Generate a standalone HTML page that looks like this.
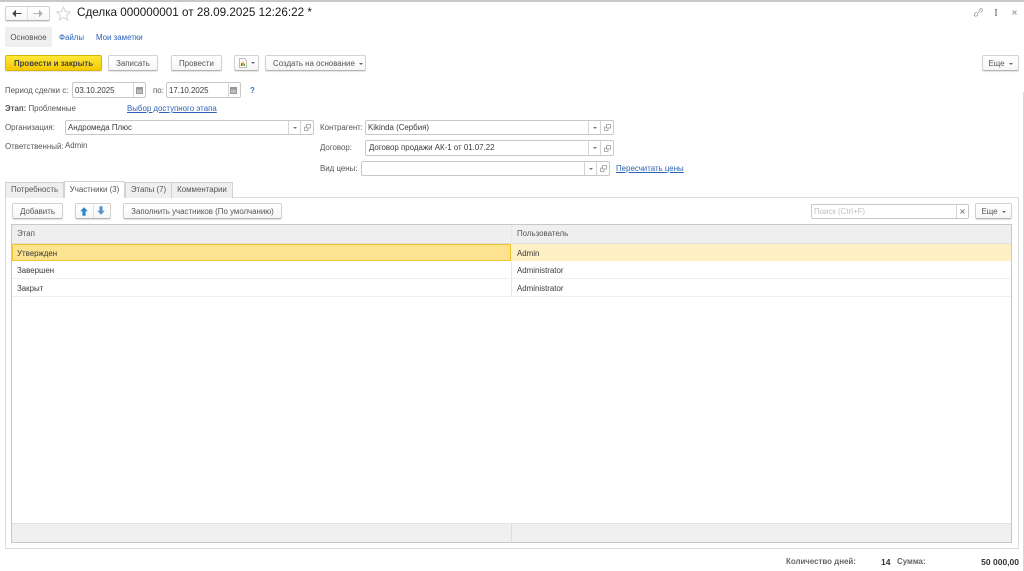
<!DOCTYPE html>
<html lang="ru"><head><meta charset="utf-8"><title>Сделка</title>
<style>
html,body{margin:0;padding:0;background:#fff}
body{width:1024px;height:571px;overflow:hidden;position:relative;font-family:"Liberation Sans",sans-serif;font-size:7.9px;color:#555;filter:blur(.3px)}
.a{position:absolute;white-space:nowrap}
.t{position:absolute;white-space:nowrap;line-height:12px}
.lnk{color:#2a62b8}
.u{text-decoration:underline}
.btn{position:absolute;box-sizing:border-box;border:1px solid #d2d2d2;border-bottom:1px solid #b4b4b4;border-radius:2px;background:linear-gradient(#fff,#f6f6f6);text-align:center;color:#555;box-shadow:0 1px 1px #e2e2e2;line-height:15px;white-space:nowrap}
.fld{position:absolute;box-sizing:border-box;border:1px solid #c8c8c8;border-radius:2px;background:#fff;color:#3a3a3a;padding-left:2px;white-space:nowrap}
.fld i{position:absolute;top:0;bottom:0;border-left:1px solid #d4d4d4;font-style:normal}
.dd:after{content:"";position:absolute;left:50%;top:50%;margin:-1px 0 0 -2px;border:2px solid transparent;border-top:2px solid #777;border-bottom:0}
.caret{display:inline-block;border:2px solid transparent;border-top:2px solid #666;border-bottom:0;vertical-align:middle;margin-left:4px}
.tab{position:absolute;box-sizing:border-box;top:182px;height:16px;border:1px solid #d2d2d2;border-bottom:none;background:#efefef;text-align:center;line-height:14px;color:#555;white-space:nowrap}
svg{position:absolute;display:block}
</style></head><body>
<div class="a" style="left:0;top:0;width:1024px;height:1.5px;background:#c8c8c8"></div>

<!-- nav -->
<div class="btn" style="left:5px;top:6px;width:45px;height:15px"></div>
<div class="a" style="left:27px;top:7px;width:1px;height:13px;background:#e2e2e2"></div>
<svg style="left:12px;top:10px" width="10" height="7" viewBox="0 0 10 7"><path d="M9.5 3.5H3M3.5 1L1 3.5L3.5 6Z" stroke="#444" stroke-width="1.1" fill="#444"/></svg>
<svg style="left:33px;top:10px" width="10" height="7" viewBox="0 0 10 7"><path d="M.5 3.5H7M6.5 1L9 3.5L6.5 6Z" stroke="#b0b0b0" stroke-width="1.1" fill="#b0b0b0"/></svg>
<svg style="left:56px;top:6px" width="15" height="15" viewBox="0 0 15 15"><path d="M7.5 1L9.4 5.6L14.3 6L10.6 9.2L11.7 14L7.5 11.4L3.3 14L4.4 9.2L.7 6L5.6 5.6Z" fill="#fff" stroke="#d4d4d4"/></svg>
<div class="a" style="left:77px;top:5px;font-size:11.7px;line-height:16px;color:#1a1a1a">Сделка 000000001 от 28.09.2025 12:26:22 *</div>

<svg style="left:973px;top:8px" width="10" height="9" viewBox="0 0 10 9"><path d="M4 6L6.5 3M3.5 4L1.5 6Q.8 7.5 2 8Q3.2 8.7 4.2 7.5L5 6.5M6 2.5L7 1.2Q8 .3 9 1Q9.8 2 9 3L7.5 4.6" fill="none" stroke="#999" stroke-width=".8"/></svg>
<div class="a" style="left:995px;top:9px;width:2px;height:1.5px;background:#999;box-shadow:0 2.5px 0 #999,0 5px 0 #999"></div>
<svg style="left:1012px;top:10px" width="5" height="5" viewBox="0 0 5 5"><path d="M.5 .5L4.5 4.5M4.5 .5L.5 4.5" stroke="#999" stroke-width=".9"/></svg>

<!-- section tabs -->
<div class="a" style="left:5px;top:27px;width:47px;height:20px;background:#efefef;border-radius:2px;text-align:center;line-height:21px;color:#555">Основное</div>
<div class="t lnk" style="left:59px;top:32px">Файлы</div>
<div class="t lnk" style="left:96px;top:32px">Мои заметки</div>

<!-- toolbar -->
<div class="btn" style="left:5px;top:55px;width:97px;height:16px;background:linear-gradient(#ffe83a,#f4c900);border-color:#d8b400;color:#444;font-weight:bold">Провести и закрыть</div>
<div class="btn" style="left:108px;top:55px;width:50px;height:16px">Записать</div>
<div class="btn" style="left:171px;top:55px;width:51px;height:16px">Провести</div>
<div class="btn" style="left:234px;top:55px;width:25px;height:16px"></div>
<svg style="left:239px;top:58px" width="8" height="10" viewBox="0 0 8 10"><path d="M.5 .5H5.5L7.5 2.5V9.5H.5Z" fill="#fff" stroke="#aaa" stroke-width=".8"/><rect x="2" y="5" width="1.2" height="3" fill="#c33"/><rect x="3.4" y="3.5" width="1.2" height="4.5" fill="#d90"/><rect x="4.8" y="5.5" width="1.2" height="2.5" fill="#4a4"/></svg>
<div class="a" style="left:251px;top:62px;border:2px solid transparent;border-top:2px solid #666;border-bottom:0"></div>
<div class="btn" style="left:265px;top:55px;width:101px;height:16px;text-align:left;padding-left:7px">Создать на основание<span class="caret"></span></div>
<div class="btn" style="left:982px;top:55px;width:37px;height:16px">Еще<span class="caret"></span></div>

<!-- period -->
<div class="t" style="left:5px;top:85px">Период сделки с:</div>
<div class="fld" style="left:72px;top:82px;width:74px;height:16px;line-height:15px">03.10.2025<i style="left:60px;width:12px"></i></div>
<svg style="left:136px;top:87px" width="7" height="7" viewBox="0 0 7 7"><rect x="0" y="0" width="7" height="7" fill="#999"/><rect x="1" y="2.5" width="5" height="3.5" fill="#bbb"/></svg>
<div class="t" style="left:153px;top:85px">по:</div>
<div class="fld" style="left:166px;top:82px;width:75px;height:16px;line-height:15px">17.10.2025<i style="left:61px;width:12px"></i></div>
<svg style="left:230px;top:87px" width="7" height="7" viewBox="0 0 7 7"><rect x="0" y="0" width="7" height="7" fill="#999"/><rect x="1" y="2.5" width="5" height="3.5" fill="#bbb"/></svg>
<div class="t" style="left:250px;top:85px;color:#2a7ac0;font-weight:bold">?</div>

<!-- stage -->
<div class="t" style="left:5px;top:103px"><b style="font-weight:bold">Этап:</b> Проблемные</div>
<div class="t lnk u" style="left:127px;top:103px">Выбор доступного этапа</div>

<!-- org -->
<div class="t" style="left:5px;top:122px">Организация:</div>
<div class="fld" style="left:65px;top:120px;width:249px;height:15px;line-height:13px">Андромеда Плюс<i class="dd" style="left:222px;width:12px"></i><i style="left:234px;width:13px"></i></div>
<svg style="left:304px;top:124px" width="7" height="7" viewBox="0 0 7 7"><path d="M2.5.5H6.5V4H2.5ZM.5 3H2.5M.5 3V6.5H4V4.5" fill="none" stroke="#999" stroke-width=".8"/></svg>
<div class="t" style="left:5px;top:141px">Ответственный:</div>
<div class="t" style="left:65px;top:140px">Admin</div>

<div class="t" style="left:320px;top:122px">Контрагент:</div>
<div class="fld" style="left:365px;top:120px;width:249px;height:15px;line-height:13px">Kikinda (Сербия)<i class="dd" style="left:222px;width:12px"></i><i style="left:234px;width:13px"></i></div>
<svg style="left:604px;top:124px" width="7" height="7" viewBox="0 0 7 7"><path d="M2.5.5H6.5V4H2.5ZM.5 3H2.5M.5 3V6.5H4V4.5" fill="none" stroke="#999" stroke-width=".8"/></svg>

<div class="t" style="left:320px;top:142px">Договор:</div>
<div class="fld" style="left:365px;top:140px;width:249px;height:16px;line-height:14px;padding-left:3px">Договор продажи АК-1 от 01.07.22<i class="dd" style="left:222px;width:12px"></i><i style="left:234px;width:13px"></i></div>
<svg style="left:604px;top:145px" width="7" height="7" viewBox="0 0 7 7"><path d="M2.5.5H6.5V4H2.5ZM.5 3H2.5M.5 3V6.5H4V4.5" fill="none" stroke="#999" stroke-width=".8"/></svg>

<div class="t" style="left:320px;top:163px">Вид цены:</div>
<div class="fld" style="left:361px;top:161px;width:249px;height:15px"><i class="dd" style="left:222px;width:12px"></i><i style="left:234px;width:13px"></i></div>
<svg style="left:600px;top:165px" width="7" height="7" viewBox="0 0 7 7"><path d="M2.5.5H6.5V4H2.5ZM.5 3H2.5M.5 3V6.5H4V4.5" fill="none" stroke="#999" stroke-width=".8"/></svg>
<div class="t lnk u" style="left:616px;top:163px">Пересчитать цены</div>

<!-- pane -->
<div class="a" style="left:5px;top:197px;width:1014px;height:352px;box-sizing:border-box;border:1px solid #dcdcdc"></div>
<div class="tab" style="left:5px;width:59px">Потребность</div>
<div class="tab" style="left:64px;width:61px;top:181px;height:17px;background:#fff;line-height:16px">Участники (3)</div>
<div class="tab" style="left:125px;width:47px">Этапы (7)</div>
<div class="tab" style="left:171px;width:62px">Комментарии</div>

<div class="btn" style="left:12px;top:203px;width:51px;height:16px">Добавить</div>
<div class="btn" style="left:75px;top:203px;width:36px;height:16px"></div>
<div class="a" style="left:93px;top:204px;width:1px;height:14px;background:#e2e2e2"></div>
<svg style="left:80px;top:207px" width="8" height="9" viewBox="0 0 8 9"><path d="M4 .3L7.8 4.3H5.6V8.7H2.4V4.3H.2Z" fill="#2b87c8"/></svg>
<svg style="left:97px;top:206px" width="8" height="9" viewBox="0 0 8 9"><path d="M4 8.7L7.8 4.7H5.6V.3H2.4V4.7H.2Z" fill="#5a94cc"/></svg>
<div class="btn" style="left:123px;top:203px;width:159px;height:16px">Заполнить участников (По умолчанию)</div>

<div class="fld" style="left:811px;top:204px;width:158px;height:15px;line-height:13px;color:#c0c0c0">Поиск (Ctrl+F)<i style="left:144px;width:12px"></i></div>
<svg style="left:960px;top:209px" width="5" height="5" viewBox="0 0 5 5"><path d="M.5 .5L4.5 4.5M4.5 .5L.5 4.5" stroke="#888"/></svg>
<div class="btn" style="left:975px;top:203px;width:37px;height:16px">Еще<span class="caret"></span></div>

<!-- table -->
<div class="a" style="left:11px;top:224px;width:1001px;height:319px;box-sizing:border-box;border:1px solid #c8c8c8"></div>
<div class="a" style="left:12px;top:225px;width:999px;height:18px;background:#efefef;border-bottom:1px solid #ddd"></div>
<div class="t" style="left:17px;top:228px">Этап</div>
<div class="t" style="left:517px;top:228px">Пользователь</div>
<div class="a" style="left:511px;top:225px;width:1px;height:72px;background:#e6e6e6"></div>
<div class="a" style="left:511px;top:244px;width:500px;height:17px;background:#fdf0c4"></div>
<div class="a" style="left:12px;top:244px;width:499px;height:17px;box-sizing:border-box;background:#fde28f;border:1px solid #f2c52e"></div>
<div class="t" style="left:17px;top:248px;color:#3a3a3a">Утвержден</div>
<div class="t" style="left:517px;top:248px;color:#3a3a3a">Admin</div>
<div class="t" style="left:17px;top:265px;color:#3a3a3a">Завершен</div>
<div class="t" style="left:517px;top:265px;color:#3a3a3a">Administrator</div>
<div class="a" style="left:12px;top:278px;width:999px;height:1px;background:#f0f0f0"></div>
<div class="t" style="left:17px;top:283px;color:#3a3a3a">Закрыт</div>
<div class="t" style="left:517px;top:283px;color:#3a3a3a">Administrator</div>
<div class="a" style="left:12px;top:296px;width:999px;height:1px;background:#f0f0f0"></div>
<div class="a" style="left:12px;top:523px;width:999px;height:19px;box-sizing:border-box;background:#f0f0f0;border-top:1px solid #e2e2e2"></div>
<div class="a" style="left:511px;top:524px;width:1px;height:18px;background:#ddd"></div>

<!-- scroll -->
<div class="a" style="left:1023px;top:92px;width:1px;height:479px;background:#d8d8d8"></div>

<!-- footer -->
<div class="t" style="left:786px;top:556px;font-weight:bold;color:#666">Количество дней:</div>
<div class="t" style="left:881px;top:556px;font-weight:bold;color:#333;font-size:8.5px">14</div>
<div class="t" style="left:897px;top:556px;color:#666;font-weight:bold">Сумма:</div>
<div class="t" style="left:970px;top:556px;width:49px;text-align:right;font-weight:bold;color:#333;font-size:8.5px">50 000,00</div>
</body></html>
